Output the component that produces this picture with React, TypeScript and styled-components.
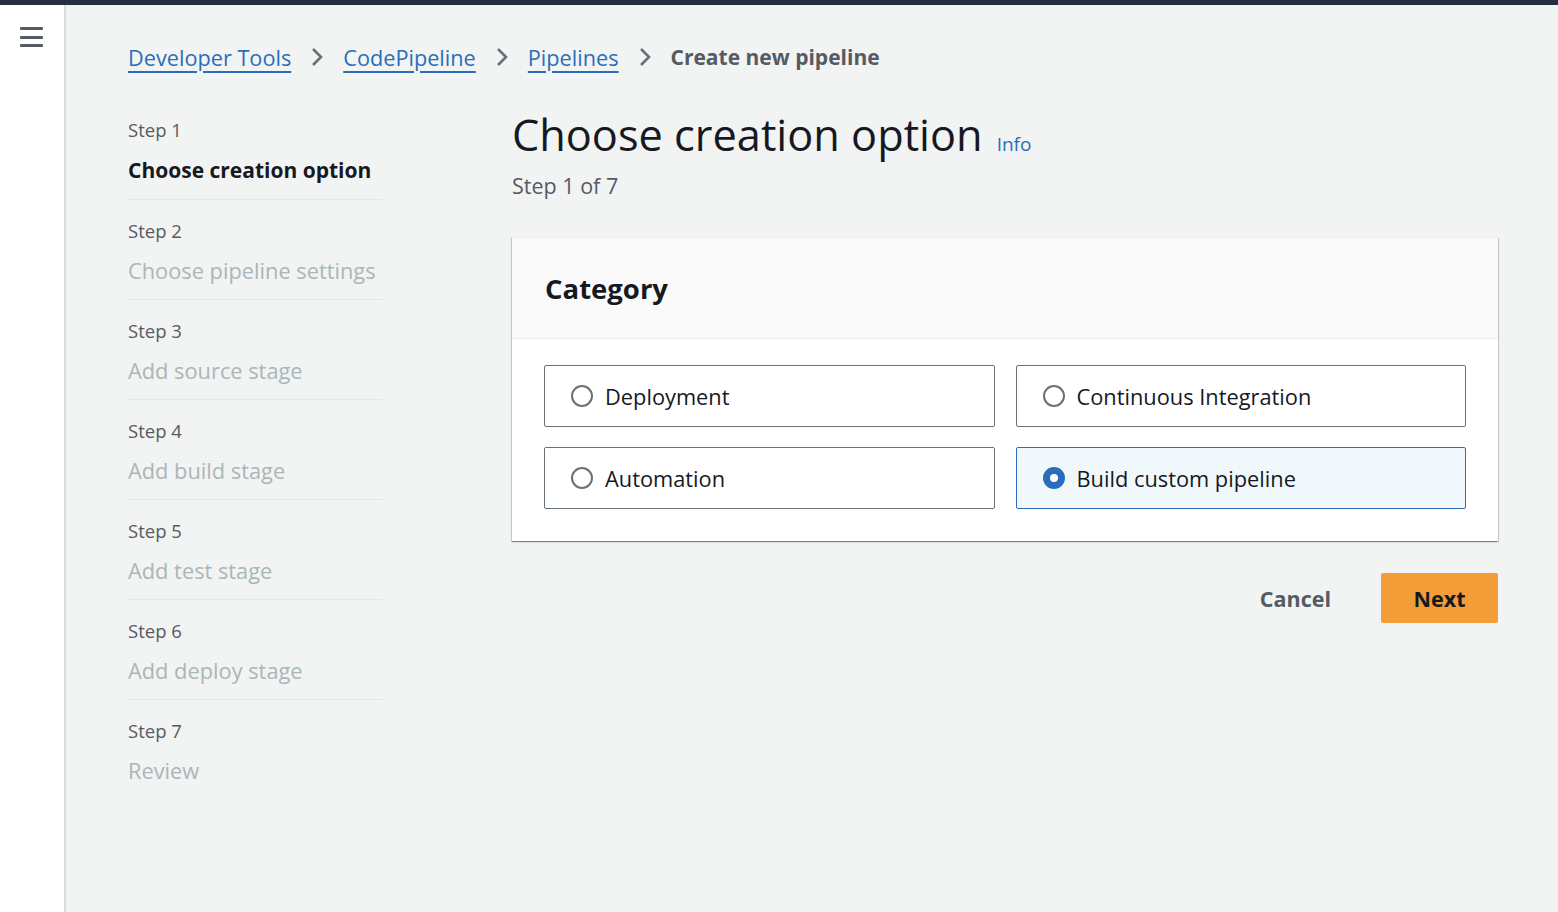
import React from "react";
import styled, { createGlobalStyle } from "styled-components";

const GlobalStyle = createGlobalStyle`
  html, body { margin: 0; padding: 0; background: #f2f3f3; }
  body { font-family: "Open Sans", "Noto Sans", Arial, sans-serif; color: #16191f; }
  * { box-sizing: border-box; }
`;

const Page = styled.div`
  display: flex;
  flex-direction: column;
  min-height: 912px;
`;

const TopBar = styled.div`
  height: 5px;
  background: #232f3e;
`;

const Body = styled.div`
  display: flex;
  flex: 1;
  min-height: 907px;
`;

const SideNav = styled.nav`
  width: 65px;
  flex-shrink: 0;
  background: #ffffff;
  border-right: 1px solid #d5dbdb;
  box-shadow: 1px 0 1px rgba(0, 0, 0, 0.08);
  padding: 22px 0 0 20px;
`;

const MenuButton = styled.button`
  width: 24px;
  height: 20px;
  padding: 0;
  border: 0;
  background: none;
  display: flex;
  flex-direction: column;
  justify-content: space-between;
  cursor: pointer;
`;

const MenuLine = styled.span`
  display: block;
  height: 3px;
  width: 23px;
  background: #545b64;
  border-radius: 1px;
`;

const Main = styled.main`
  flex: 1;
  padding: 35px 60px 0 63px;
`;

const Breadcrumbs = styled.div`
  display: flex;
  align-items: center;
  height: 34px;
  font-size: 21.7px;
`;

const Crumb = styled.a`
  color: #2a6ebb;
  text-decoration: underline;
  text-decoration-thickness: 2px;
  text-underline-offset: 5px;
  cursor: pointer;
`;

const CurrentCrumb = styled.span`
  color: #545b64;
  font-weight: 700;
  font-size: 21px;
`;

const Chevron = styled.svg`
  margin: 0 20px 0 20px;
  flex-shrink: 0;
`;

const Columns = styled.div`
  display: flex;
  margin-top: 24px;
`;

const StepList = styled.ol`
  list-style: none;
  margin: 1px 129px 0 0;
  padding: 0;
  width: 255px;
  flex-shrink: 0;
`;

const StepItem = styled.li<{ $last?: boolean; $first?: boolean }>`
  padding: 20px 0 ${(p) => (p.$first ? "15px" : "14px")};
  border-bottom: ${(p) => (p.$last ? "0" : "1px solid #e4e7e8")};
  display: flex;
  flex-direction: column;
  gap: 15px;
`;

const StepLabel = styled.div`
  font-size: 18.5px;
  line-height: 22px;
  color: #545b64;
`;

const StepTitle = styled.div<{ $active?: boolean }>`
  font-size: ${(p) => (p.$active ? "21px" : "21.8px")};
  line-height: 28px;
  color: ${(p) => (p.$active ? "#16191f" : "#aab7b8")};
  font-weight: ${(p) => (p.$active ? 700 : 400)};
  white-space: nowrap;
`;

const Content = styled.div`
  flex: 1;
  max-width: 986px;
  padding-top: 13px;
`;

const TitleRow = styled.div`
  display: flex;
  align-items: baseline;
  gap: 14px;
`;

const Heading = styled.h1`
  margin: 0;
  font-size: 43.3px;
  line-height: 48px;
  font-weight: 400;
  color: #16191f;
`;

const InfoLink = styled.a`
  color: #2a6ebb;
  font-size: 19px;
  font-weight: 400;
  cursor: pointer;
`;

const SubTitle = styled.div`
  margin-top: 13px;
  font-size: 21.5px;
  line-height: 28px;
  color: #545b64;
`;

const Container = styled.section`
  margin-top: 37px;
  background: #ffffff;
  box-shadow: 0 1px 1px 0 rgba(0, 28, 36, 0.3), 1px 1px 1px 0 rgba(0, 28, 36, 0.15),
    -1px 1px 1px 0 rgba(0, 28, 36, 0.15);
  border-top: 1px solid #eaeded;
`;

const ContainerHeader = styled.header`
  background: #fafafa;
  border-bottom: 1px solid #eaeded;
  height: 101px;
  display: flex;
  align-items: center;
  padding: 0 33px;
`;

const ContainerTitle = styled.h2`
  margin: 0;
  font-size: 27.5px;
  font-weight: 700;
  color: #16191f;
`;

const TileGrid = styled.div`
  display: grid;
  grid-template-columns: 1fr 1fr;
  gap: 20px 21px;
  padding: 26px 32px 32px;
`;

const Tile = styled.label<{ $selected?: boolean }>`
  height: 62px;
  display: flex;
  align-items: center;
  gap: 12px;
  padding: 0 26px;
  border: 1px solid ${(p) => (p.$selected ? "#2a6ebb" : "#687078")};
  background: ${(p) => (p.$selected ? "#f1f8fc" : "#ffffff")};
  border-radius: 2px;
  font-size: 21.8px;
  color: #16191f;
  cursor: pointer;
`;

const Radio = styled.span<{ $checked?: boolean }>`
  width: 22px;
  height: 22px;
  border-radius: 50%;
  flex-shrink: 0;
  border: ${(p) => (p.$checked ? "7px solid #2a6ebb" : "2px solid #687078")};
  background: #ffffff;
`;

const Actions = styled.div`
  display: flex;
  justify-content: flex-end;
  align-items: center;
  gap: 26px;
  margin-top: 32px;
`;

const CancelButton = styled.button`
  border: 0;
  background: none;
  font-family: inherit;
  font-size: 21.5px;
  font-weight: 700;
  color: #545b64;
  padding: 10px 24px;
  cursor: pointer;
`;

const PrimaryButton = styled.button`
  width: 117px;
  height: 50px;
  border: 0;
  border-radius: 2px;
  background: #f29d38;
  font-family: inherit;
  font-size: 21.5px;
  font-weight: 700;
  color: #16191f;
  cursor: pointer;
`;

const ChevronIcon = () => (
  <Chevron width="12" height="20" viewBox="0 0 12 20">
    <path d="M2 2 L10 10 L2 18" fill="none" stroke="#687078" strokeWidth="2.6" />
  </Chevron>
);

const steps = [
  "Choose creation option",
  "Choose pipeline settings",
  "Add source stage",
  "Add build stage",
  "Add test stage",
  "Add deploy stage",
  "Review",
];

const options = [
  { label: "Deployment", selected: false },
  { label: "Continuous Integration", selected: false },
  { label: "Automation", selected: false },
  { label: "Build custom pipeline", selected: true },
];

export default function App() {
  return (
    <Page>
      <GlobalStyle />
      <TopBar />
      <Body>
        <SideNav>
          <MenuButton aria-label="Open menu">
            <MenuLine />
            <MenuLine />
            <MenuLine />
          </MenuButton>
        </SideNav>
        <Main>
          <Breadcrumbs>
            <Crumb>Developer Tools</Crumb>
            <ChevronIcon />
            <Crumb>CodePipeline</Crumb>
            <ChevronIcon />
            <Crumb>Pipelines</Crumb>
            <ChevronIcon />
            <CurrentCrumb>Create new pipeline</CurrentCrumb>
          </Breadcrumbs>
          <Columns>
            <StepList>
              {steps.map((s, i) => (
                <StepItem key={s} $first={i === 0} $last={i === steps.length - 1}>
                  <StepLabel>Step {i + 1}</StepLabel>
                  <StepTitle $active={i === 0}>{s}</StepTitle>
                </StepItem>
              ))}
            </StepList>
            <Content>
              <TitleRow>
                <Heading>Choose creation option</Heading>
                <InfoLink>Info</InfoLink>
              </TitleRow>
              <SubTitle>Step 1 of 7</SubTitle>
              <Container>
                <ContainerHeader>
                  <ContainerTitle>Category</ContainerTitle>
                </ContainerHeader>
                <TileGrid>
                  {options.map((o) => (
                    <Tile key={o.label} $selected={o.selected}>
                      <Radio $checked={o.selected} />
                      {o.label}
                    </Tile>
                  ))}
                </TileGrid>
              </Container>
              <Actions>
                <CancelButton>Cancel</CancelButton>
                <PrimaryButton>Next</PrimaryButton>
              </Actions>
            </Content>
          </Columns>
        </Main>
      </Body>
    </Page>
  );
}
